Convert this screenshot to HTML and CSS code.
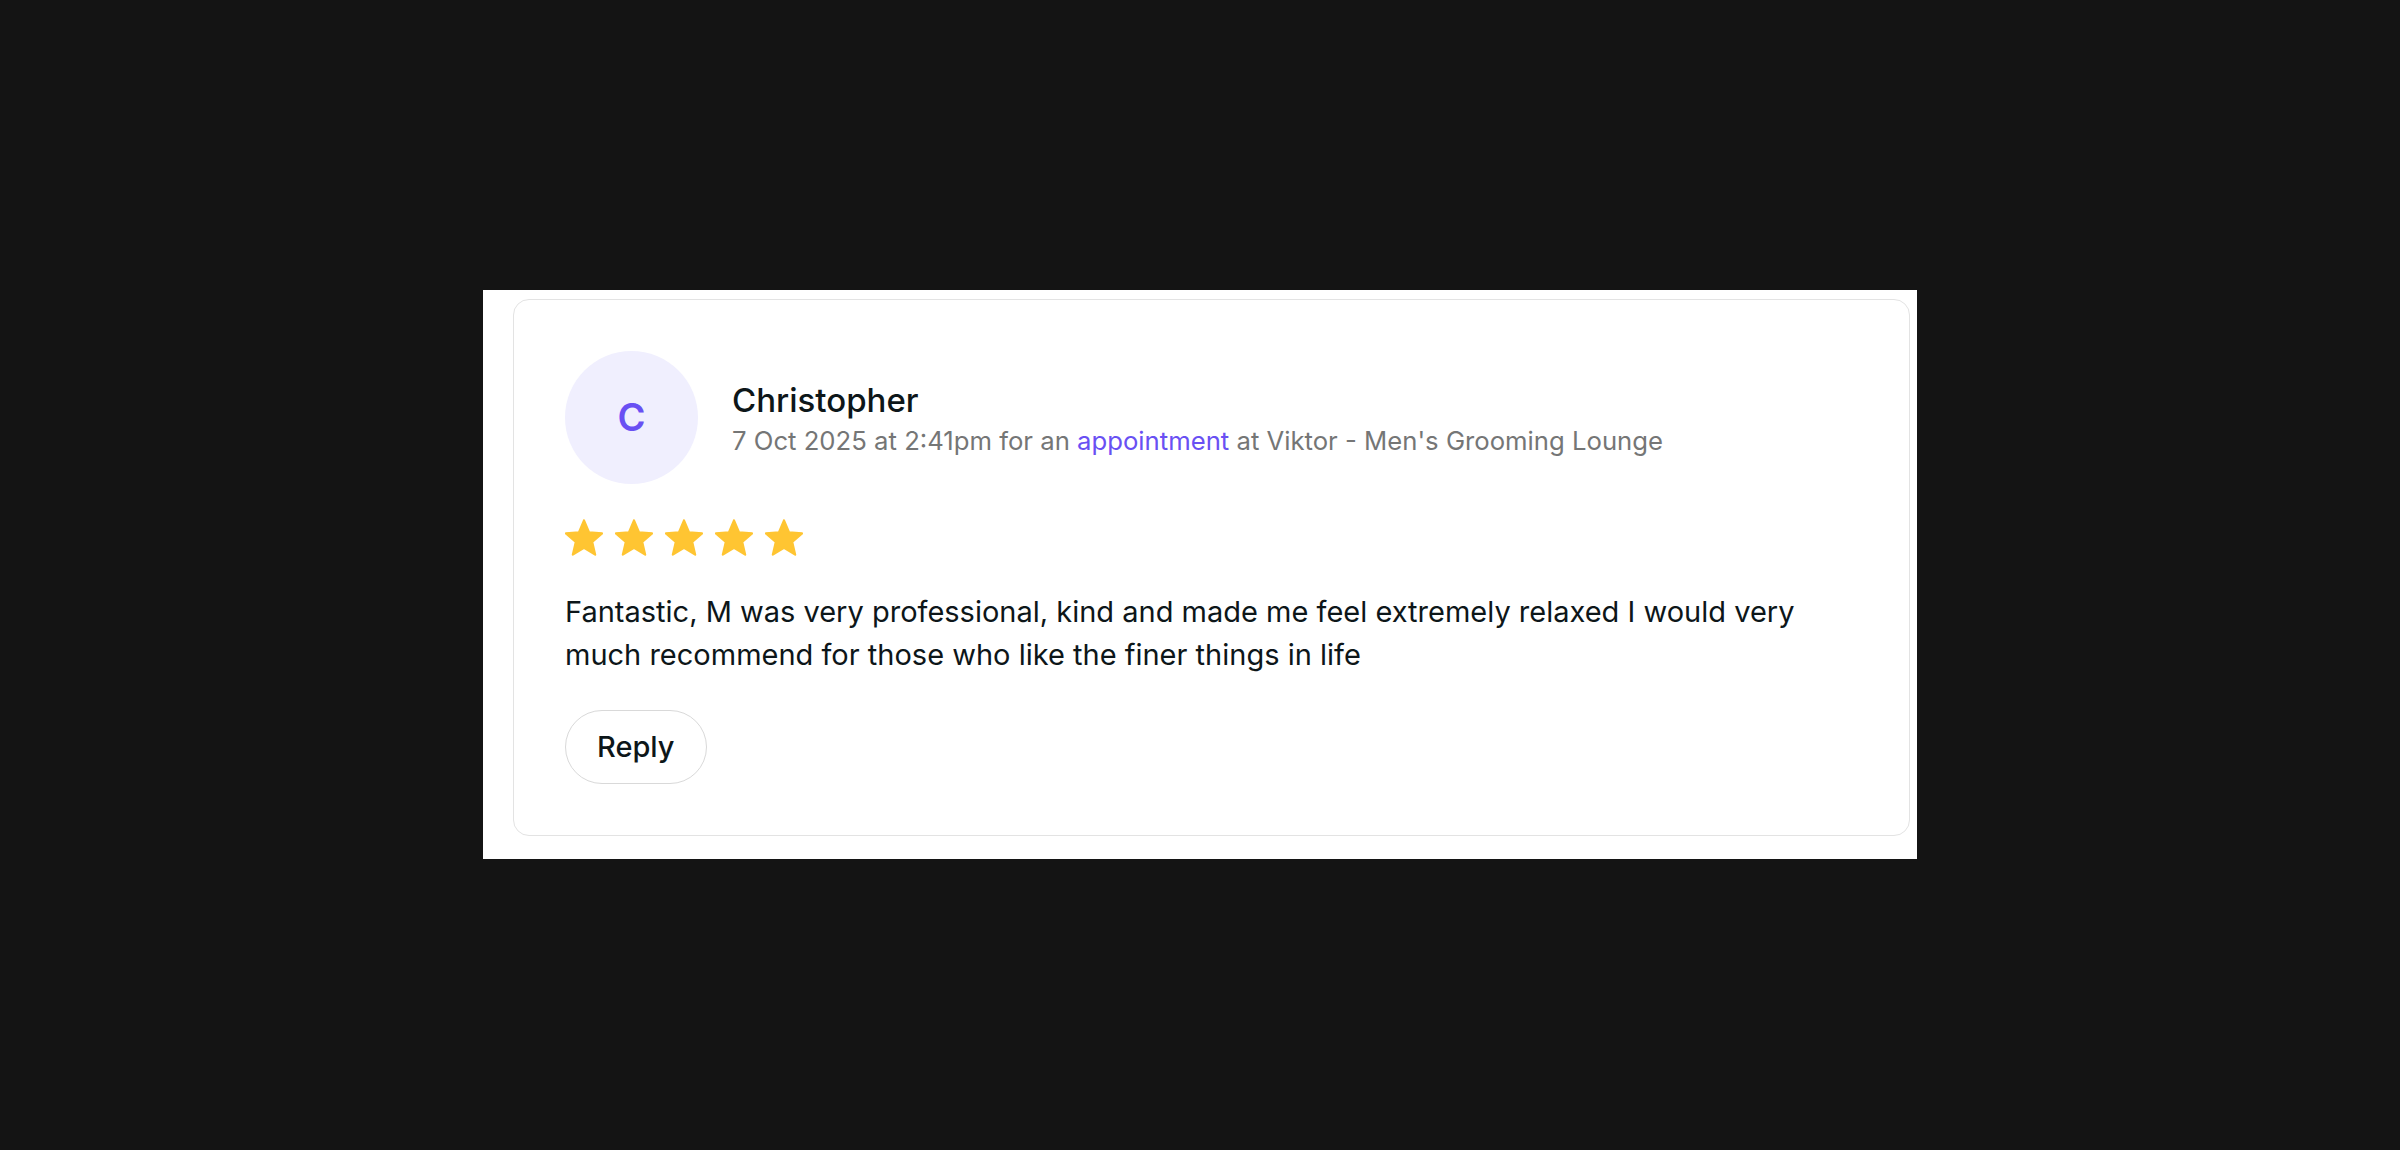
FILE: index.html
```html
<!DOCTYPE html>
<html lang="en">
<head>
<meta charset="utf-8">
<title>Review</title>
<link rel="stylesheet" href="styles.css">
</head>
<body>
<main class="panel">
  <article class="card">
    <header class="review-head">
      <div class="avatar">C</div>
      <div class="who">
        <div class="name">Christopher</div>
        <div class="meta">7 Oct 2025 at 2:41pm for an <a class="link" href="#">appointment</a> at Viktor - Men's Grooming Lounge</div>
      </div>
    </header>
    <div class="stars" aria-label="5 stars">
      <svg class="star" viewBox="1.5 1.5 21 20"><path d="M12 17.27L18.18 21l-1.64-7.03L22 9.24l-7.19-.61L12 2 9.19 8.63 2 9.24l5.46 4.73L5.82 21z"/></svg>
      <svg class="star" viewBox="1.5 1.5 21 20"><path d="M12 17.27L18.18 21l-1.64-7.03L22 9.24l-7.19-.61L12 2 9.19 8.63 2 9.24l5.46 4.73L5.82 21z"/></svg>
      <svg class="star" viewBox="1.5 1.5 21 20"><path d="M12 17.27L18.18 21l-1.64-7.03L22 9.24l-7.19-.61L12 2 9.19 8.63 2 9.24l5.46 4.73L5.82 21z"/></svg>
      <svg class="star" viewBox="1.5 1.5 21 20"><path d="M12 17.27L18.18 21l-1.64-7.03L22 9.24l-7.19-.61L12 2 9.19 8.63 2 9.24l5.46 4.73L5.82 21z"/></svg>
      <svg class="star" viewBox="1.5 1.5 21 20"><path d="M12 17.27L18.18 21l-1.64-7.03L22 9.24l-7.19-.61L12 2 9.19 8.63 2 9.24l5.46 4.73L5.82 21z"/></svg>
    </div>
    <p class="text">Fantastic, M was very professional, kind and made me feel extremely relaxed I would very much recommend for those who like the finer things in life</p>
    <button class="reply" type="button">Reply</button>
  </article>
</main>
</body>
</html>
```

FILE: styles.css
```css
* { box-sizing: border-box; }

html, body {
  margin: 0;
  padding: 0;
}

body {
  background: #141414;
  height: 100vh;
  display: flex;
  align-items: center;
  justify-content: center;
  font-family: Inter, "Noto Sans", sans-serif;
  color: #0d1619;
}

.panel {
  background: #ffffff;
  width: 1434px;
  padding: 9px 7px 23px 30px;
  margin-top: -2px;
}

.card {
  border: 1px solid #e3e3e3;
  border-radius: 16px;
  padding: 51px;
  display: flex;
  flex-direction: column;
  align-items: flex-start;
}

.review-head {
  display: flex;
  align-items: center;
  gap: 34px;
}

.avatar {
  width: 133px;
  height: 133px;
  border-radius: 50%;
  background: #f0effe;
  color: #6950f3;
  display: flex;
  align-items: center;
  justify-content: center;
  font-size: 38px;
  font-weight: 600;
  flex: none;
}

.who {
  display: flex;
  flex-direction: column;
  padding-top: 5px;
}

.name {
  font-size: 33px;
  line-height: 40px;
  font-weight: 500;
  color: #0d1619;
}

.meta {
  margin-top: 2px;
  font-size: 25.7px;
  line-height: 38px;
  color: #757676;
}

.link {
  color: #6950f3;
  text-decoration: none;
}

.stars {
  display: flex;
  gap: 12px;
  margin-top: 35px;
}

.star {
  width: 38px;
  height: 37px;
  fill: #ffc532;
  stroke: #ffc532;
  stroke-width: 1.2;
  stroke-linejoin: round;
  display: block;
}

.text {
  margin: 34px 0 0 0;
  font-size: 29px;
  line-height: 43px;
  color: #0d1619;
  max-width: 1260px;
}

.reply {
  margin-top: 34px;
  height: 74px;
  padding: 0 31px;
  border: 1px solid #d9d9d9;
  border-radius: 37px;
  background: #ffffff;
  font-family: Inter, "Noto Sans", sans-serif;
  font-size: 29px;
  font-weight: 500;
  color: #0d1619;
}
```
